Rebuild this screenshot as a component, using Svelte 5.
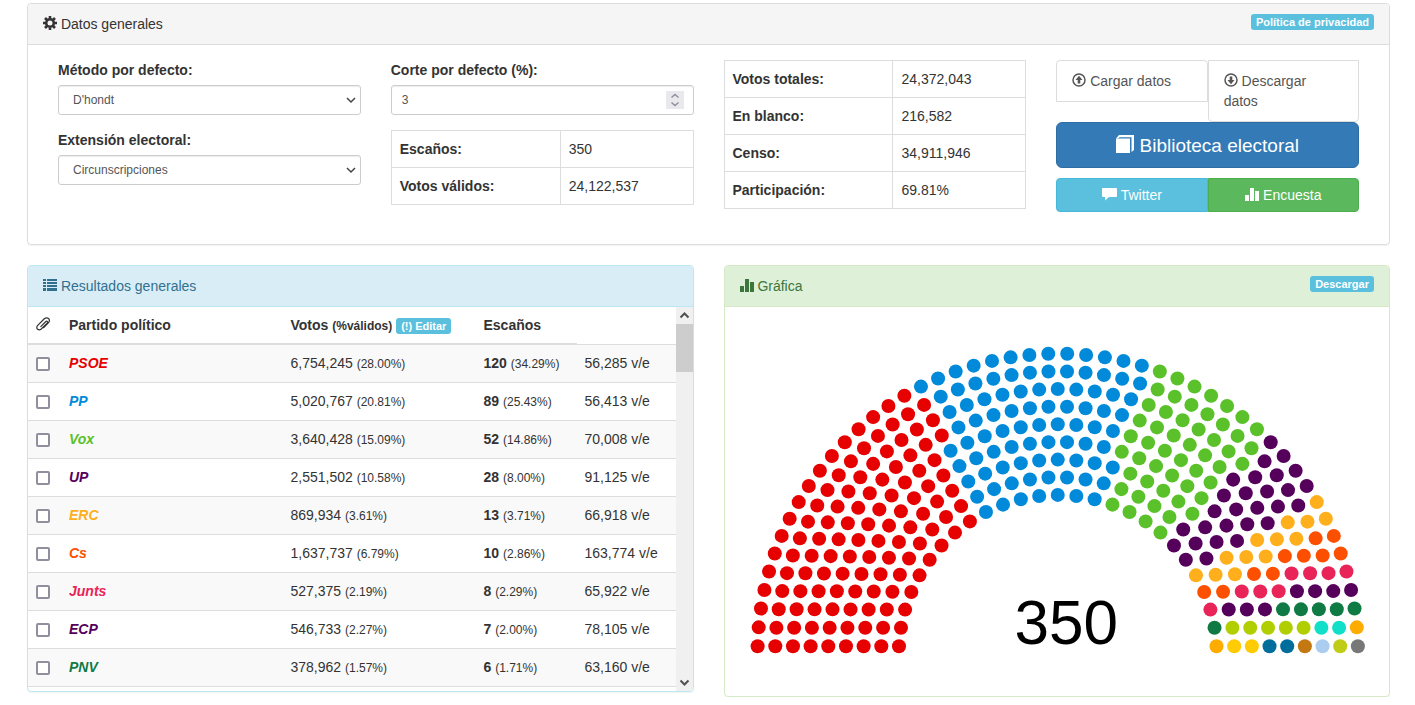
<script lang="ts">
interface Party {
  name: string;
  color: string;
  votes: string;
  votePct: string;
  seats: number;
  seatPct: string;
  cost: string;
}

const parties: Party[] = [
  { name: "PSOE", color: "#e60000", votes: "6,754,245", votePct: "28.00", seats: 120, seatPct: "34.29", cost: "56,285" },
  { name: "PP", color: "#008ad9", votes: "5,020,767", votePct: "20.81", seats: 89, seatPct: "25.43", cost: "56,413" },
  { name: "Vox", color: "#5ac12a", votes: "3,640,428", votePct: "15.09", seats: 52, seatPct: "14.86", cost: "70,008" },
  { name: "UP", color: "#55005b", votes: "2,551,502", votePct: "10.58", seats: 28, seatPct: "8.00", cost: "91,125" },
  { name: "ERC", color: "#ffaf1c", votes: "869,934", votePct: "3.61", seats: 13, seatPct: "3.71", cost: "66,918" },
  { name: "Cs", color: "#fc5000", votes: "1,637,737", votePct: "6.79", seats: 10, seatPct: "2.86", cost: "163,774" },
  { name: "Junts", color: "#e92458", votes: "527,375", votePct: "2.19", seats: 8, seatPct: "2.29", cost: "65,922" },
  { name: "ECP", color: "#55005b", votes: "546,733", votePct: "2.27", seats: 7, seatPct: "2.00", cost: "78,105" },
  { name: "PNV", color: "#0f7a43", votes: "378,962", votePct: "1.57", seats: 6, seatPct: "1.71", cost: "63,160" },
];

// Smaller groups only show up in the chart.
const others = [
  { color: "#b1cf00", seats: 5 },
  { color: "#11dfc8", seats: 2 },
  { color: "#ffac00", seats: 2 },
  { color: "#ffcb05", seats: 2 },
  { color: "#006d9c", seats: 2 },
  { color: "#c47812", seats: 1 },
  { color: "#abcdef", seats: 1 },
  { color: "#bfcd17", seats: 1 },
  { color: "#787878", seats: 1 },
];

const seatColors = [...parties, ...others].flatMap((p) => Array<string>(p.seats).fill(p.color));

// Hemicycle: nine arcs, seats handed out left to right by angle.
const ROWS = [27, 30, 33, 36, 39, 42, 45, 48, 50];
const CX = 332.5;
const CY = 346.6;
const LIFT = 7.6;

const seats = ROWS.flatMap((count, row) => {
  const r = (300 * (9 + row)) / 17;
  const start = Math.asin(LIFT / r);
  const step = (Math.PI - 2 * start) / (count - 1);
  return Array.from({ length: count }, (_, i) => {
    const angle = start + i * step;
    return { angle, x: CX - r * Math.cos(angle), y: CY - r * Math.sin(angle) };
  });
})
  .sort((a, b) => a.angle - b.angle)
  .map((s, i) => ({ ...s, color: seatColors[i] }));

let method = $state("dhondt");
let extension = $state("circ");
let threshold = $state(3);
</script>

{#snippet stats()}
  <svg class="icon" viewBox="0 0 14 14" aria-hidden="true">
    <path d="M0 8h4v6H0zM5 1h4v13H5zM10 4h4v10h-4z" fill="currentColor" />
  </svg>
{/snippet}

{#snippet chevron()}
  <svg class="chevron" viewBox="0 0 10 10" aria-hidden="true">
    <path d="M1 3l4 4 4-4" fill="none" stroke="#444" stroke-width="1.5" />
  </svg>
{/snippet}

<main>
  <section class="panel general">
    <header class="heading">
      <span>
        <svg class="icon" viewBox="0 0 14 14" aria-hidden="true">
          <g fill="none" stroke="currentColor">
            <circle cx="7" cy="7" r="3.8" stroke-width="2.6" />
            <path d="M7 0v2.500M7 11.500V14M0 7h2.500M11.500 7H14M2 2l2 2M10 10l2 2M12 2l-2 2M4 10l-2 2" stroke-width="2.600" />
          </g>
        </svg>
        Datos generales
      </span>
      <a class="tag" href="#privacidad">Política de privacidad</a>
    </header>
    <div class="settings">
      <div class="column">
        <div class="field">
          <label for="method">Método por defecto:</label>
          <div class="control">
            <select id="method" bind:value={method}>
              <option value="dhondt">D'hondt</option>
              <option value="sainte">Sainte-Laguë</option>
            </select>
            {@render chevron()}
          </div>
        </div>
        <div class="field">
          <label for="extension">Extensión electoral:</label>
          <div class="control">
            <select id="extension" bind:value={extension}>
              <option value="circ">Circunscripciones</option>
              <option value="unica">Circunscripción única</option>
            </select>
            {@render chevron()}
          </div>
        </div>
      </div>

      <div class="column">
        <div class="field">
          <label for="threshold">Corte por defecto (%):</label>
          <div class="control">
            <input id="threshold" type="number" min="0" max="100" bind:value={threshold} />
            <svg class="spinner" viewBox="0 0 18 18" aria-hidden="true">
              <path d="M0 0h18v18H0z" fill="#e9e9ed" />
              <path d="M5.500 6.500 9 3.500l3.500 3M5.500 11.500l3.500 3 3.500-3" fill="none" stroke="#8f8f9d" stroke-width="1.500" />
            </svg>
          </div>
        </div>
        <table class="facts">
          <tbody>
            <tr><th scope="row">Escaños:</th><td>350</td></tr>
            <tr><th scope="row">Votos válidos:</th><td>24,122,537</td></tr>
          </tbody>
        </table>
      </div>

      <div class="column">
        <table class="facts">
          <tbody>
            <tr><th scope="row">Votos totales:</th><td>24,372,043</td></tr>
            <tr><th scope="row">En blanco:</th><td>216,582</td></tr>
            <tr><th scope="row">Censo:</th><td>34,911,946</td></tr>
            <tr><th scope="row">Participación:</th><td>69.81%</td></tr>
          </tbody>
        </table>
      </div>

      <div class="column actions">
        <div class="files">
          <a href="#cargar">
            <svg class="icon" viewBox="0 0 14 14" aria-hidden="true">
              <circle cx="7" cy="7" r="6" fill="none" stroke="currentColor" stroke-width="1.5" />
              <path d="M7 2.800 10.500 7H8.300v3.500H5.700V7H3.500z" fill="currentColor" />
            </svg>
            Cargar datos
          </a>
          <a href="#descargar">
            <svg class="icon" viewBox="0 0 14 14" aria-hidden="true">
              <circle cx="7" cy="7" r="6" fill="none" stroke="currentColor" stroke-width="1.5" />
              <path d="M7 11.200 3.500 7h2.200V3.500h2.600V7h2.200z" fill="currentColor" />
            </svg>
            Descargar datos
          </a>
        </div>
        <button class="library" type="button">
          <svg class="icon large" viewBox="0 0 18 18" aria-hidden="true">
            <path d="M0 3.500h14V18H0z" fill="currentColor" />
            <path d="M0 3.500 3 0h15v15l-2.500 2V2.200H3.500L2 3.500z" fill="currentColor" />
          </svg>
          Biblioteca electoral
        </button>
        <div class="pair">
          <button class="twitter" type="button">
            <svg class="icon wide" viewBox="0 0 15 14" aria-hidden="true">
              <path d="M1 1h13q1 0 1 1v7q0 1-1 1H7l-4 3.500V10H1q-1 0-1-1V2q0-1 1-1z" fill="currentColor" />
            </svg>
            Twitter
          </button>
          <button class="poll" type="button">{@render stats()} Encuesta</button>
        </div>
      </div>
    </div>
  </section>

  <div class="lower">
    <section class="panel results">
      <header class="heading">
        <span>
          <svg class="icon" viewBox="0 0 14 14" aria-hidden="true">
            <path d="M0 1h3v2H0zM4 1h10v2H4zM0 4h3v2H0zM4 4h10v2H4zM0 7h3v2H0zM4 7h10v2H4zM0 10h3v3H0zM4 10h10v3H4z" fill="currentColor" />
          </svg>
          Resultados generales
        </span>
      </header>
      <div class="scroller">
        <div class="viewport">
          <table class="ranking">
            <colgroup>
              <col class="pick" />
              <col class="party" />
              <col class="votes" />
              <col class="seats" />
              <col class="cost" />
            </colgroup>
            <thead>
              <tr>
                <th scope="col" aria-label="Seleccionar">
                  <svg class="icon" viewBox="0 0 14 14" aria-hidden="true">
                    <path d="M4.500 9.800 9.800 4.500q1-.8 1.600 0 .5.700-.3 1.600L5.300 12q-1.900 1.500-3.700.300-1.600-1.600-.1-3.700L8.300 1.800q2.300-1.900 4.300-.3 1.700 1.900-.1 4.200L7.300 11" fill="none" stroke="currentColor" stroke-width="1.200" />
                  </svg>
                </th>
                <th scope="col">Partido político</th>
                <th scope="col">Votos <small>(%válidos)</small> <a class="tag" href="#editar">(!) Editar</a></th>
                <th scope="col">Escaños</th>
              </tr>
            </thead>
            <tbody>
              {#each parties as party}
                <tr>
                  <td><input type="checkbox" aria-label={party.name} /></td>
                  <td><em style:color={party.color}>{party.name}</em></td>
                  <td>{party.votes} <small>({party.votePct}%)</small></td>
                  <td><b>{party.seats}</b> <small>({party.seatPct}%)</small></td>
                  <td>{party.cost} v/e</td>
                </tr>
              {/each}
            </tbody>
          </table>
        </div>
        <div class="scrollbar" aria-hidden="true">
          <svg viewBox="0 0 17 17"><path d="M4.500 10.500l4-4 4 4" fill="none" stroke="#505050" stroke-width="2" /></svg>
          <div class="thumb"></div>
          <svg viewBox="0 0 17 17"><path d="M4.500 6.500l4 4 4-4" fill="none" stroke="#505050" stroke-width="2" /></svg>
        </div>
      </div>
    </section>

    <section class="panel graph">
      <header class="heading">
        <span>{@render stats()} Gráfica</span>
        <a class="tag" href="#imagen">Descargar</a>
      </header>
      <svg class="hemicycle" viewBox="0 0 664 389" role="img" aria-label="350 escaños">
        {#each seats as seat}
          <circle cx={seat.x} cy={seat.y} r="7" fill={seat.color} />
        {/each}
        <text x="341" y="337" text-anchor="middle">350</text>
      </svg>
    </section>
  </div>
</main>

<style>
  :global(body) {
    background: #fff;
    color: #333;
    font-family: "Liberation Sans", Arial, sans-serif;
    font-size: 14px;
    line-height: 20px;
  }
  main,
  main * {
    box-sizing: border-box;
  }
  main {
    padding: 3px 25px 0 27px;
  }
  a {
    color: inherit;
    text-decoration: none;
  }
  .icon {
    width: 14px;
    height: 14px;
    vertical-align: -1px;
  }
  .icon.wide {
    width: 15px;
  }
  .icon.large {
    width: 18px;
    height: 18px;
  }
  .panel {
    border: 1px solid #ddd;
    border-radius: 4px;
    box-shadow: 0 1px 1px rgba(0, 0, 0, 0.05);
    overflow: hidden;
  }
  .heading {
    display: flex;
    justify-content: space-between;
    align-items: flex-start;
    padding: 10px 15px;
    background: #f5f5f5;
    border-bottom: 1px solid #ddd;
  }
  .tag {
    padding: 0 5px;
    background: #5bc0de;
    border-radius: 3px;
    color: #fff;
    font-size: 11px;
    font-weight: 700;
    line-height: 16px;
  }
  .settings {
    display: grid;
    grid-template-columns: repeat(4, minmax(0, 1fr));
    gap: 30px;
    padding: 15px 30px 32px;
  }
  .field {
    margin-bottom: 15px;
  }
  label {
    display: block;
    margin-bottom: 5px;
    font-weight: 700;
  }
  .control {
    position: relative;
  }
  .control select,
  .control input {
    display: block;
    width: 100%;
    height: 30px;
    margin: 0;
    padding: 5px 10px;
    appearance: none;
    background: #fff;
    border: 1px solid #ccc;
    border-radius: 3px;
    box-shadow: inset 0 1px 1px rgba(0, 0, 0, 0.075);
    color: #555;
    font-family: inherit;
    font-size: 12px;
    line-height: 18px;
  }
  .control select {
    padding-left: 14px;
  }
  .control input {
    appearance: textfield;
  }
  .chevron,
  .spinner {
    position: absolute;
    pointer-events: none;
  }
  .chevron {
    top: 10px;
    right: 5px;
    width: 10px;
  }
  .spinner {
    top: 6px;
    right: 10px;
    width: 18px;
  }
  table {
    width: 100%;
    border-collapse: collapse;
    text-align: left;
  }
  .facts th,
  .facts td {
    padding: 8px;
    border: 1px solid #ddd;
  }
  .facts th {
    width: 56%;
  }
  .files {
    display: flex;
    align-items: flex-start;
    color: #555;
  }
  .files a {
    flex: 1;
    min-width: 0;
    padding: 10px 15px;
    border: 1px solid #ddd;
  }
  .files a:first-child {
    border-radius: 4px 4px 0 0;
  }
  .files a:last-child {
    border-radius: 0 0 4px 4px;
  }
  button {
    padding: 6px 12px;
    border: 1px solid;
    color: #fff;
    font: inherit;
    cursor: pointer;
  }
  .library {
    width: 100%;
    height: 46px;
    margin-bottom: 10px;
    background: #337ab7;
    border-color: #2e6da4;
    border-radius: 6px;
    font-size: 19px;
  }
  .pair {
    display: flex;
  }
  .pair button {
    flex: 1;
  }
  .twitter {
    background: #5bc0de;
    border-color: #46b8da;
    border-radius: 4px 0 0 4px;
  }
  .poll {
    background: #5cb85c;
    border-color: #4cae4c;
    border-radius: 0 4px 4px 0;
  }
  .lower {
    display: grid;
    grid-template-columns: repeat(2, minmax(0, 1fr));
    align-items: start;
    gap: 30px;
    margin-top: 20px;
  }
  .results {
    border-color: #bce8f1;
  }
  .results .heading {
    background: #d9edf7;
    border-color: #bce8f1;
    color: #31708f;
  }
  .graph {
    border-color: #d6e9c6;
  }
  .graph .heading {
    background: #dff0d8;
    border-color: #d6e9c6;
    color: #3c763d;
  }
  .scroller {
    display: flex;
    height: 384px;
  }
  .viewport {
    flex: 1;
    overflow: hidden;
  }
  .ranking {
    table-layout: fixed;
    border-bottom: 1px solid #ddd;
  }
  .pick {
    width: 33px;
  }
  .votes {
    width: 193px;
  }
  .seats {
    width: 101px;
  }
  .cost {
    width: 99px;
  }
  .ranking th,
  .ranking td {
    padding: 8px;
    white-space: nowrap;
  }
  .ranking th {
    border-bottom: 2px solid #ddd;
  }
  .ranking td {
    height: 38px;
    border-top: 1px solid #ddd;
  }
  .ranking tbody tr:nth-child(odd) {
    background: #f9f9f9;
  }
  .ranking em {
    font-weight: 700;
  }
  .ranking small {
    font-size: 12px;
    line-height: 16px;
  }
  .ranking .tag {
    padding: 2px 5px;
  }
  .ranking input {
    display: block;
    width: 14px;
    height: 14px;
    margin: 2px 0 0;
    appearance: none;
    background: #fff;
    border: 2px solid #8f8f9d;
    border-radius: 2px;
  }
  .ranking input:checked {
    background: #8f8f9d;
  }
  .scrollbar {
    display: flex;
    flex-direction: column;
    width: 17px;
    background: #f0f0f0;
  }
  .scrollbar svg {
    display: block;
    height: 17px;
  }
  .scrollbar svg:last-child {
    margin-top: auto;
  }
  .thumb {
    height: 48px;
    background: #cdcdcd;
  }
  .hemicycle {
    display: block;
    width: 100%;
  }
  .hemicycle text {
    fill: #000;
    font-size: 62px;
  }
</style>
